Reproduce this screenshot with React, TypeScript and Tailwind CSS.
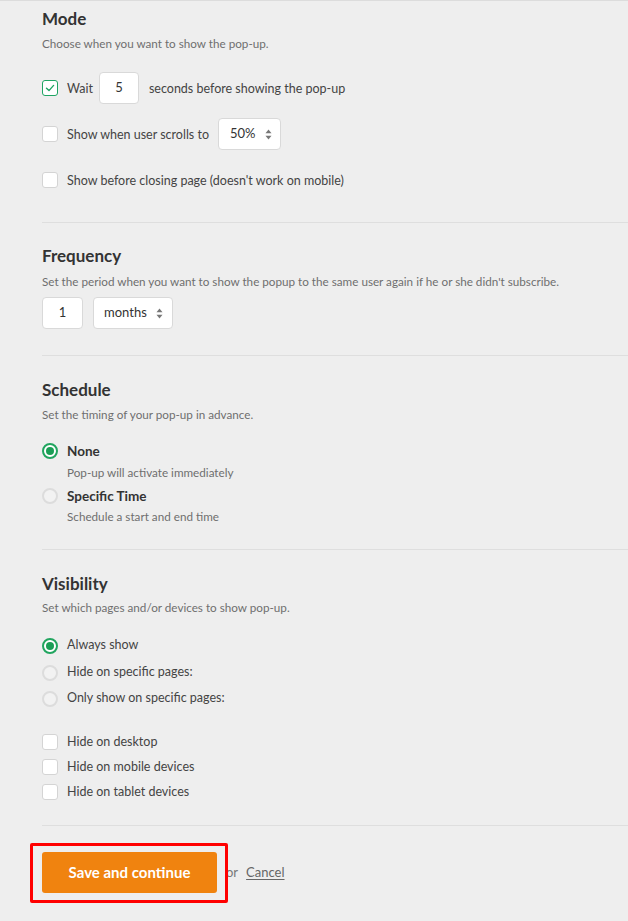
import React from "react";

const font = { fontFamily: "Lato, 'Open Sans', Arial, sans-serif" };

function Checkbox({ checked = false }: { checked?: boolean }) {
  if (checked) {
    return (
      <span className="flex h-4 w-4 shrink-0 items-center justify-center rounded-[3px] border-[1.5px] border-[#1fa463] bg-white">
        <svg width="10" height="10" viewBox="0 0 10 10" fill="none">
          <path d="M1.5 5.2 L4 7.6 L8.6 2.4" stroke="#1fa463" strokeWidth="1.4" strokeLinecap="round" strokeLinejoin="round" />
        </svg>
      </span>
    );
  }
  return <span className="block h-4 w-4 shrink-0 rounded-[3px] border border-[#d4d4d4] bg-white" />;
}

function Radio({ checked = false }: { checked?: boolean }) {
  if (checked) {
    return (
      <span className="flex h-4 w-4 shrink-0 items-center justify-center rounded-full border-2 border-[#21a55f] bg-white">
        <span className="block h-2 w-2 rounded-full bg-[#1a9e55]" />
      </span>
    );
  }
  return <span className="block h-4 w-4 shrink-0 rounded-full border-2 border-[#dcdcdc] bg-[#f2f2f2]" />;
}

function Arrows() {
  return (
    <svg width="7" height="11" viewBox="0 0 7 11" className="shrink-0">
      <path d="M3.5 0.5 L6.5 4.2 L0.5 4.2 Z" fill="#777" />
      <path d="M3.5 10.5 L6.5 6.8 L0.5 6.8 Z" fill="#777" />
    </svg>
  );
}

function Heading({ children }: { children: React.ReactNode }) {
  return <h2 className="text-[17px] font-bold leading-5 text-[#333]">{children}</h2>;
}

function Desc({ children, className = "" }: { children: React.ReactNode; className?: string }) {
  return <p className={"text-[11.7px] leading-4 text-[#6e6e6e] " + className}>{children}</p>;
}

export default function App() {
  return (
    <div className="min-h-[921px] w-[628px] overflow-hidden border-t border-[#dcdcdc] bg-[#eeeeee] text-[12.5px] text-[#444]" style={font}>
      <div className="pl-[42px]">
        {/* Mode */}
        <section className="pt-[8px] pb-[26px]">
          <Heading>Mode</Heading>
          <Desc className="mt-[6px]">Choose when you want to show the pop-up.</Desc>
          <div className="mt-[21px] flex flex-col gap-[14px]">
            <div className="flex h-8 items-center">
              <Checkbox checked />
              <span className="ml-[9px] translate-y-[1px]">Wait</span>
              <span className="ml-[6px] flex h-8 w-10 items-center justify-center rounded-[4px] border border-[#d9d9d9] bg-white text-[13px] text-[#333]">5</span>
              <span className="ml-[10px] translate-y-[1px]">seconds before showing the pop-up</span>
            </div>
            <div className="flex h-8 items-center">
              <Checkbox />
              <span className="ml-[9px] translate-y-[1px]">Show when user scrolls to</span>
              <span className="ml-[9px] flex h-8 w-[63px] items-center justify-between rounded-[4px] border border-[#d9d9d9] bg-white pl-[11px] pr-[8px] text-[13px] text-[#333]">
                <span>50%</span>
                <Arrows />
              </span>
            </div>
            <div className="flex h-8 items-center">
              <Checkbox />
              <span className="ml-[9px] translate-y-[1px]">Show before closing page (doesn't work on mobile)</span>
            </div>
          </div>
        </section>
        <div className="h-px bg-[#dedede]" />

        {/* Frequency */}
        <section className="pt-[23px] pb-[26px]">
          <Heading>Frequency</Heading>
          <Desc className="mt-[7px]">Set the period when you want to show the popup to the same user again if he or she didn't subscribe.</Desc>
          <div className="mt-[8px] flex items-center gap-[10px]">
            <span className="flex h-8 w-[41px] items-center justify-center rounded-[4px] border border-[#d9d9d9] bg-white text-[13px] text-[#333]">1</span>
            <span className="flex h-8 w-[80px] items-center justify-between rounded-[4px] border border-[#d9d9d9] bg-white pl-[10px] pr-[9px] text-[13px] text-[#333]">
              <span>months</span>
              <Arrows />
            </span>
          </div>
        </section>
        <div className="h-px bg-[#dedede]" />

        {/* Schedule */}
        <section className="pt-[24px] pb-[25px]">
          <Heading>Schedule</Heading>
          <Desc className="mt-[6px]">Set the timing of your pop-up in advance.</Desc>
          <div className="mt-[21px] flex items-center">
            <Radio checked />
            <span className="ml-[9px] text-[13.5px] font-bold leading-4 text-[#333]">None</span>
          </div>
          <Desc className="ml-[25px] mt-[5px]">Pop-up will activate immediately</Desc>
          <div className="mt-[8px] flex items-center">
            <Radio />
            <span className="ml-[9px] text-[13.5px] font-bold leading-4 text-[#333]">Specific Time</span>
          </div>
          <Desc className="ml-[25px] mt-[4px]">Schedule a start and end time</Desc>
        </section>
        <div className="h-px bg-[#dedede]" />

        {/* Visibility */}
        <section className="pt-[24px] pb-[25px]">
          <Heading>Visibility</Heading>
          <Desc className="mt-[5px]">Set which pages and/or devices to show pop-up.</Desc>
          <div className="mt-[23px] flex flex-col gap-[10px]">
            <div className="flex h-4 items-center">
              <Radio checked />
              <span className="ml-[9px] -translate-y-[1px]">Always show</span>
            </div>
            <div className="mt-px flex h-4 items-center">
              <Radio />
              <span className="ml-[9px] -translate-y-[1px]">Hide on specific pages:</span>
            </div>
            <div className="flex h-4 items-center">
              <Radio />
              <span className="ml-[9px] -translate-y-[1px]">Only show on specific pages:</span>
            </div>
          </div>
          <div className="mt-[27px] flex flex-col gap-[9px]">
            <div className="flex h-4 items-center">
              <Checkbox />
              <span className="ml-[9px]">Hide on desktop</span>
            </div>
            <div className="flex h-4 items-center">
              <Checkbox />
              <span className="ml-[9px]">Hide on mobile devices</span>
            </div>
            <div className="flex h-4 items-center">
              <Checkbox />
              <span className="ml-[9px]">Hide on tablet devices</span>
            </div>
          </div>
        </section>
        <div className="h-px bg-[#dedede]" />

        {/* Actions */}
        <div className="flex items-center pt-[26px]">
          <div className="relative">
            <button className="flex h-[41px] w-[175px] items-center justify-center rounded-[3px] bg-[#f0830f] text-[15px] font-bold text-white">
              Save and continue
            </button>
            <span className="pointer-events-none absolute -bottom-[10px] -left-[12px] -right-[11px] -top-[9px] rounded-[2px] border-[3px] border-[#ff0000]" />
          </div>
          <span className="ml-[9px] text-[13px] text-[#777]">or</span>
          <a className="ml-[8px] text-[13px] text-[#666] underline underline-offset-2">Cancel</a>
        </div>
      </div>
    </div>
  );
}
